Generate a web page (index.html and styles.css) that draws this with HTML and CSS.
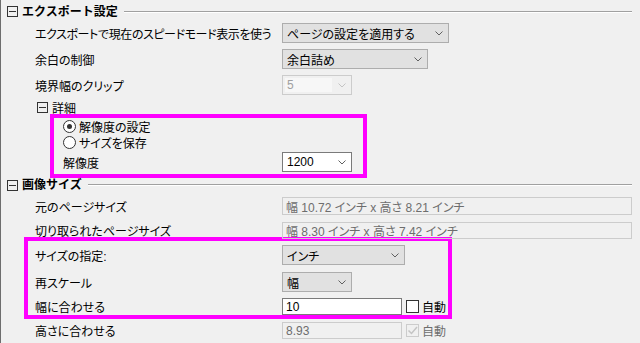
FILE: index.html
```html
<!DOCTYPE html>
<html lang="ja">
<head>
  <meta charset="UTF-8">
  <meta name="viewport" content="width=device-width, initial-scale=1.0">
  <title>エクスポート設定</title>
  <link rel="stylesheet" href="styles.css">
</head>
<body>
<div class="panel">
  <div class="group-head">
    <span class="toggle"></span>
    <span class="group-title">エクスポート設定</span>
    <span class="rule"></span>
  </div>

  <div class="row row-a">
    <span class="label tight">エクスポートで現在のスピードモード表示を使う</span>
    <div class="select sel-speed"><span>ページの設定を適用する</span><svg class="chev" width="8" height="5" viewBox="0 0 8 5"><polyline points="0.5,0.5 4,4 7.5,0.5"/></svg></div>
  </div>

  <div class="row row-b">
    <span class="label">余白の制御</span>
    <div class="select sel-margin"><span>余白詰め</span><svg class="chev" width="8" height="5" viewBox="0 0 8 5"><polyline points="0.5,0.5 4,4 7.5,0.5"/></svg></div>
  </div>

  <div class="row row-c">
    <span class="label">境界幅のクリップ</span>
    <div class="select sel-clip disabled"><span class="inner">5</span><svg class="chev" width="8" height="5" viewBox="0 0 8 5"><polyline points="0.5,0.5 4,4 7.5,0.5"/></svg></div>
  </div>

  <div class="sub-head">
    <span class="toggle small"></span>
    <span>詳細</span>
  </div>

  <div class="mark mark-res">
    <div class="radio-row"><span class="radio checked"></span><span>解像度の設定</span></div>
    <div class="radio-row"><span class="radio"></span><span>サイズを保存</span></div>
    <div class="row row-res">
      <span class="label label-inner">解像度</span>
      <div class="select white sel-res"><span>1200</span><svg class="chev" width="8" height="5" viewBox="0 0 8 5"><polyline points="0.5,0.5 4,4 7.5,0.5"/></svg></div>
    </div>
  </div>

  <div class="group-head head-size">
    <span class="toggle"></span>
    <span class="group-title">画像サイズ</span>
    <span class="rule"></span>
  </div>

  <div class="row row-d">
    <span class="label">元のページサイズ</span>
    <div class="field readonly wide">幅 10.72 インチ x 高さ 8.21 インチ</div>
  </div>

  <div class="row row-e">
    <span class="label">切り取られたページサイズ</span>
    <div class="field readonly wide">幅 8.30 インチ x 高さ 7.42 インチ</div>
  </div>

  <div class="mark mark-size">
    <div class="row row-f">
      <span class="label">サイズの指定:</span>
      <div class="select sel-unit"><span>インチ</span><svg class="chev" width="8" height="5" viewBox="0 0 8 5"><polyline points="0.5,0.5 4,4 7.5,0.5"/></svg></div>
    </div>
    <div class="row row-g">
      <span class="label">再スケール</span>
      <div class="select sel-scale"><span>幅</span><svg class="chev" width="8" height="5" viewBox="0 0 8 5"><polyline points="0.5,0.5 4,4 7.5,0.5"/></svg></div>
    </div>
    <div class="row row-h">
      <span class="label">幅に合わせる</span>
      <div class="field edit">10</div>
      <span class="check"></span><span class="check-text">自動</span>
    </div>
  </div>

  <div class="row row-i">
    <span class="label">高さに合わせる</span>
    <div class="field readonly">8.93</div>
    <span class="check disabled"><svg width="11" height="11" viewBox="0 0 11 11"><polyline points="1.5,5.5 4.5,8.5 10,2"/></svg></span><span class="check-text muted">自動</span>
  </div>
</div>
</body>
</html>
```

FILE: styles.css
```css
body {
  margin: 0;
  background: #f0f0f0;
  font-family: "Liberation Sans", "Noto Sans CJK JP", sans-serif;
  font-size: 12px;
  color: #000;
}
.panel {
  border-left: 1px solid #6d6d6d;
  height: 343px;
  box-sizing: border-box;
  font-feature-settings: "palt";
}
.group-head {
  display: flex;
  align-items: center;
  height: 23px;
  padding-left: 6px;
}
.head-size {
  height: 14px;
}
.toggle {
  position: relative;
  width: 9px;
  height: 9px;
  border: 1px solid #333;
  margin-right: 4px;
  flex-shrink: 0;
}
.toggle::after {
  content: "";
  position: absolute;
  left: 1px;
  right: 1px;
  top: 4px;
  height: 1px;
  background: #333;
}
.group-title {
  font-weight: bold;
  line-height: 14px;
  font-feature-settings: normal;
}
.rule {
  flex: 1;
  margin: 0 8px 0 6px;
  border-top: 1px solid #a0a0a0;
  border-bottom: 1px solid #fff;
}
.row {
  display: flex;
  align-items: center;
  height: 20px;
  padding-left: 34px;
}
.label {
  width: 247px;
  flex-shrink: 0;
  white-space: nowrap;
}
.label.tight {
  letter-spacing: -0.4px;
}
.label-inner {
  width: 219px;
}
.row-b, .row-c { margin-top: 6px; }
.sub-head {
  display: flex;
  align-items: center;
  height: 13px;
  margin-top: 6px;
  padding-left: 36px;
}
.mark {
  border: 4px solid #ff00ff;
  box-sizing: border-box;
}
.mark-res {
  width: 317px;
  margin-left: 49px;
  padding: 0 0 2px 9px;
}
.mark-res .row {
  padding-left: 0;
}
.radio-row {
  display: flex;
  align-items: center;
  height: 16px;
}
.radio {
  position: relative;
  width: 11px;
  height: 11px;
  border: 1px solid #333;
  border-radius: 50%;
  background: #fff;
  margin-right: 3px;
}
.radio.checked::after {
  content: "";
  position: absolute;
  left: 3px;
  top: 3px;
  width: 5px;
  height: 5px;
  border-radius: 50%;
  background: #333;
}
.row-res { margin-top: 2px; }
.select {
  display: flex;
  align-items: center;
  justify-content: space-between;
  height: 20px;
  box-sizing: border-box;
  padding: 0 5px 0 4px;
  background: #e1e1e1;
  border: 1px solid #adadad;
  white-space: nowrap;
}
.select .chev {
  fill: none;
  stroke: #606060;
  stroke-width: 1;
}
.select.white {
  background: #fff;
  border-color: #7a7a7a;
}
.select.disabled {
  background: #f0f0f0;
  border-color: #cccccc;
  color: #a0a0a0;
  padding-left: 2px;
}
.select.disabled .chev { stroke: #c4c4c4; }
.select .inner {
  width: 45px;
  height: 14px;
  line-height: 14px;
  padding-left: 2px;
  background: #f7f7f7;
}
.sel-speed { width: 167px; }
.sel-margin { width: 146px; }
.sel-clip, .sel-res, .sel-scale { width: 70px; }
.sel-unit { width: 123px; }
.field {
  display: flex;
  align-items: center;
  width: 120px;
  height: 17px;
  box-sizing: border-box;
  padding-left: 3px;
  white-space: nowrap;
}
.field.readonly {
  border: 1px solid #cccccc;
  color: #6d6d6d;
}
.field.wide { width: 350px; }
.field.edit {
  background: #fff;
  border: 1px solid #7a7a7a;
}
.row-d { height: 18px; margin-top: 5px; }
.row-d .field { height: 18px; }
.row-e { height: 17px; margin-top: 7px; }
.mark-size {
  width: 428px;
  margin-left: 23px;
  margin-top: -2px;
  padding-left: 7px;
}
.mark-size .row { padding-left: 0; }
.row-f { margin-top: 4px; }
.row-g { margin-top: 7px; }
.row-h { height: 17px; margin-top: 6px; }
.row-i { height: 17px; margin-top: 3px; }
.check {
  display: flex;
  align-items: center;
  justify-content: center;
  width: 13px;
  height: 13px;
  box-sizing: border-box;
  margin-left: 4px;
  margin-right: 3px;
  border: 1px solid #333;
  background: #fff;
}
.check.disabled {
  border-color: #cccccc;
  background: #f0f0f0;
}
.check svg {
  fill: none;
  stroke: #c4c4c4;
  stroke-width: 1.5;
}
.check-text.muted { color: #6d6d6d; }
```
